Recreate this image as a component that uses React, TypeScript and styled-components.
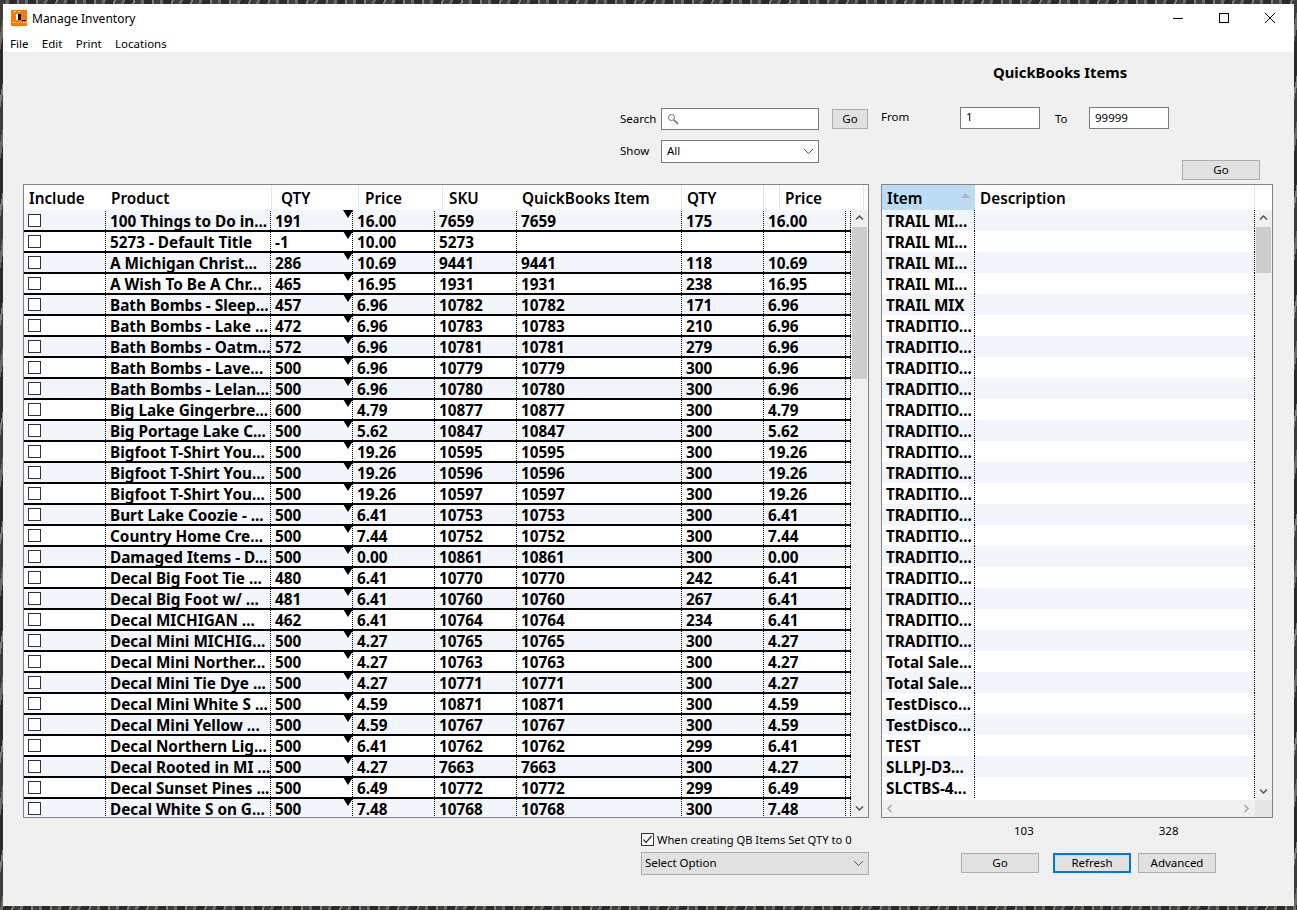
import styled, { createGlobalStyle } from "styled-components";

const GlobalStyle = createGlobalStyle`
  html, body {
    margin: 0;
    height: 910px;
    overflow: hidden;
    background: #3a3a38;
    font-family: "Noto Sans", "Open Sans", "Liberation Sans", sans-serif;
  }
`;

const Desktop = styled.div`
  width: 1297px;
  height: 910px;
  padding: 4px 3px;
  box-sizing: border-box;
  background: repeating-linear-gradient(100deg, #3d3d3b 0 6px, #6a6a66 6px 9px, #2b2b2a 9px 17px, #80807a 17px 19px);
`;

const Window = styled.div`
  height: 902px;
  display: flex;
  flex-direction: column;
  background: #f0f0f0;
`;

const TitleBar = styled.div`
  height: 28px;
  flex: none;
  background: #fff;
  display: flex;
  align-items: center;
  padding-left: 8px;
  font-size: 12px;
  color: #000;
`;

const AppIcon = styled.svg`
  width: 16px;
  height: 16px;
  margin-right: 5px;
`;

const WindowButtons = styled.div`
  margin-left: auto;
  margin-right: 1px;
  display: flex;
  align-self: stretch;
`;

const WindowButton = styled.div`
  width: 46px;
  display: flex;
  align-items: center;
  justify-content: center;
  margin-top: -1px;
`;

const MenuBar = styled.div`
  height: 20px;
  flex: none;
  box-sizing: border-box;
  padding: 2px 0 0 7px;
  background: #fff;
  display: flex;
  align-items: center;
  gap: 13.4px;
  font-size: 11.5px;
`;

const Body = styled.div`
  flex: 1;
  display: flex;
  padding: 0 21px 0 20px;
  gap: 12px;
`;

const LeftColumn = styled.div`
  width: 846px;
  display: flex;
  flex-direction: column;
`;

const RightColumn = styled.div`
  width: 392px;
  display: flex;
  flex-direction: column;
`;

const LeftTop = styled.div`
  height: 132px;
  box-sizing: border-box;
  padding: 56px 1px 0 597px;
  display: grid;
  grid-template-columns: 41px 158px 13px 36px;
  grid-template-rows: 22px 23px;
  row-gap: 10px;
  align-items: center;
  font-size: 11.5px;
`;

const Label = styled.span`
  padding-bottom: 2px;
`;

const RightTop = styled.div`
  height: 132px;
  box-sizing: border-box;
  display: flex;
  flex-direction: column;
  font-size: 11.5px;
`;

const Heading = styled.div`
  font-weight: 700;
  font-size: 14.8px;
  margin: 11px 0 0 112px;
  height: 21px;
  line-height: 18px;
`;

const RangeRow = styled.div`
  display: flex;
  align-items: center;
  margin-top: 22px;
  height: 23px;
`;

const RangeLabel = styled.span<{ $width: number; $nudge: number; $pad?: number }>`
  width: ${(p) => p.$width}px;
  box-sizing: border-box;
  padding-left: ${(p) => p.$pad ?? 0}px;
  transform: translateY(${(p) => p.$nudge}px);
`;

const Field = styled.div<{ $width?: number; $nudge?: number }>`
  height: 22px;
  box-sizing: border-box;
  width: ${(p) => (p.$width ? `${p.$width}px` : "auto")};
  margin-top: ${(p) => p.$nudge ?? 0}px;
  border: 1px solid #7a7a7a;
  background: #fff;
  display: flex;
  align-items: center;
  padding: 0 5px 2px;
  font-size: 11.5px;
`;

const SelectBox = styled(Field)<{ $disabled?: boolean }>`
  height: 23px;
  justify-content: space-between;
  background: ${(p) => (p.$disabled ? "#e1e1e1" : "#fff")};
  border-color: ${(p) => (p.$disabled ? "#adadad" : "#7a7a7a")};
  padding-right: 4px;
  padding-left: ${(p) => (p.$disabled ? 3 : 5)}px;
  letter-spacing: ${(p) => (p.$disabled ? "-0.05px" : "0")};
  svg {
    margin-top: 2px;
  }
`;

const SearchIcon = styled.svg`
  margin-top: 2px;
`;

const Button = styled.div<{ $width: number; $focused?: boolean }>`
  width: ${(p) => p.$width}px;
  height: 20px;
  box-sizing: border-box;
  background: #e1e1e1;
  border: ${(p) => (p.$focused ? "2px solid #0078d7" : "1px solid #adadad")};
  display: flex;
  align-items: center;
  justify-content: center;
  padding-bottom: 2px;
  font-size: 11.5px;
`;

const RangeGo = styled.div`
  display: flex;
  justify-content: flex-end;
  padding-right: 13px;
  margin-top: 31px;
`;

const Table = styled.div`
  height: 634px;
  box-sizing: border-box;
  border: 1px solid #82828a;
  background: #fff;
  position: relative;
  overflow: hidden;
`;

const HeaderRow = styled.div`
  height: 25px;
  display: flex;
  background: #fff;
`;

const HeaderCell = styled.div<{ $width: number; $pad: number; $sorted?: boolean; $line?: boolean }>`
  width: ${(p) => p.$width}px;
  flex: none;
  box-sizing: border-box;
  padding-left: ${(p) => p.$pad}px;
  padding-top: 1px;
  display: flex;
  align-items: center;
  font-size: 15.3px;
  font-weight: 600;
  color: #000;
  background: ${(p) => (p.$sorted ? "#bcdcf4" : "#fff")};
  border-right: ${(p) => (p.$line ? "1px solid #e5e5e5" : "none")};
`;

const SortArrow = styled.svg`
  margin-left: auto;
  margin-right: 5px;
  margin-bottom: 6px;
`;

const GridBody = styled.div`
  display: flex;
`;

const Rows = styled.div<{ $width: number; $ruled?: boolean }>`
  width: ${(p) => p.$width}px;
  flex: none;
  box-sizing: border-box;
  padding-top: ${(p) => (p.$ruled ? 1 : 0)}px;
  background: ${(p) => (p.$ruled ? "linear-gradient(#f2f5fa 1px, #fff 1px)" : "#fff")};
`;

const Row = styled.div<{ $alt: boolean; $ruled?: boolean }>`
  height: 21px;
  box-sizing: border-box;
  display: flex;
  line-height: ${(p) => (p.$ruled ? 20 : 22)}px;
  background: ${(p) => (p.$alt ? "#f2f5fa" : "#fff")};
  border-bottom: ${(p) => (p.$ruled ? "2px solid #000" : "none")};
`;

const Cell = styled.div<{ $width: number }>`
  width: ${(p) => p.$width}px;
  flex: none;
  box-sizing: border-box;
  position: relative;
  padding-left: 4px;
  font-size: 15.3px;
  font-weight: 700;
  color: #000;
  white-space: nowrap;
  border-right: 1px dotted #000;
`;

const CheckCell = styled(Cell)`
  padding: 3px 0 0 4px;
`;

const Check = styled.span`
  display: block;
  width: 13px;
  height: 13px;
  box-sizing: border-box;
  border: 1px solid #333;
  background: #fff;
`;

const Corner = styled.span`
  position: absolute;
  right: -1px;
  top: -1px;
  width: 0;
  height: 0;
  border-left: 5px solid transparent;
  border-right: 5px solid transparent;
  border-top: 8px solid #000;
`;

const VScroll = styled.div<{ $height: number; $thumbTop: number; $thumbHeight: number }>`
  width: 17px;
  height: ${(p) => p.$height}px;
  flex: none;
  background: #f0f0f0;
  position: relative;
  display: flex;
  flex-direction: column;
  justify-content: space-between;
  &::after {
    content: "";
    position: absolute;
    left: 1px;
    right: 1px;
    top: ${(p) => p.$thumbTop}px;
    height: ${(p) => p.$thumbHeight}px;
    background: #cdcdcd;
  }
`;

const ScrollCap = styled.div`
  height: 17px;
  display: flex;
  align-items: center;
  justify-content: center;
`;

const HScroll = styled.div`
  position: absolute;
  left: 0;
  right: 0;
  bottom: 0;
  height: 17px;
  background: #f0f0f0;
  display: flex;
  align-items: center;
  justify-content: space-between;
  padding: 0 21px 0 4px;
  &::after {
    content: "";
    position: absolute;
    right: 0;
    top: 0;
    width: 17px;
    height: 17px;
    background: #e6e6e6;
  }
`;

const BottomLeft = styled.div`
  display: flex;
  flex-direction: column;
  align-items: flex-end;
  margin-top: 14px;
`;

const CheckRow = styled.div`
  width: 228px;
  height: 16px;
  display: flex;
  align-items: center;
  font-size: 11.2px;
  gap: 3px;
  margin-top: -1px;
`;

const CheckedBox = styled.svg`
  width: 13px;
  height: 13px;
  flex: none;
`;

const WideSelect = styled(SelectBox)`
  margin-top: 5px;
`;

const Counts = styled.div`
  display: flex;
  font-size: 11.5px;
  margin-top: 5px;
  height: 16px;
`;

const Count = styled.span<{ $left: number }>`
  margin-left: ${(p) => p.$left}px;
`;

const BottomButtons = styled.div`
  display: flex;
  margin: 14px 0 0 80px;
  gap: 7px;
`;

const GapButton = styled(Button)`
  margin-right: 7px;
`;

const Chevron = ({ dir }: { dir: "up" | "down" | "left" | "right" }) => {
  const d = {
    up: "M1 5.5 L4.5 2 L8 5.5",
    down: "M1 2.5 L4.5 6 L8 2.5",
    left: "M5.5 1 L2 4.5 L5.5 8",
    right: "M2.5 1 L6 4.5 L2.5 8",
  }[dir];
  const light = dir === "left" || dir === "right";
  return (
    <svg width="9" height="9" viewBox="0 0 9 9">
      <path d={d} fill="none" stroke={light ? "#a3a3a3" : "#505050"} strokeWidth="1.5" />
    </svg>
  );
};

const DropArrow = () => (
  <svg width="11" height="7" viewBox="0 0 11 7">
    <path d="M1 1 L5.5 5.5 L10 1" fill="none" stroke="#555" strokeWidth="1" />
  </svg>
);

const products: [string, string, string, string, string, string, string][] = [
  ["100 Things to Do in...", "191", "16.00", "7659", "7659", "175", "16.00"],
  ["5273 - Default Title", "-1", "10.00", "5273", "", "", ""],
  ["A Michigan Christ...", "286", "10.69", "9441", "9441", "118", "10.69"],
  ["A Wish To Be A Chr...", "465", "16.95", "1931", "1931", "238", "16.95"],
  ["Bath Bombs - Sleep...", "457", "6.96", "10782", "10782", "171", "6.96"],
  ["Bath Bombs - Lake ...", "472", "6.96", "10783", "10783", "210", "6.96"],
  ["Bath Bombs - Oatm...", "572", "6.96", "10781", "10781", "279", "6.96"],
  ["Bath Bombs - Lave...", "500", "6.96", "10779", "10779", "300", "6.96"],
  ["Bath Bombs - Lelan...", "500", "6.96", "10780", "10780", "300", "6.96"],
  ["Big Lake Gingerbre...", "600", "4.79", "10877", "10877", "300", "4.79"],
  ["Big Portage Lake C...", "500", "5.62", "10847", "10847", "300", "5.62"],
  ["Bigfoot T-Shirt You...", "500", "19.26", "10595", "10595", "300", "19.26"],
  ["Bigfoot T-Shirt You...", "500", "19.26", "10596", "10596", "300", "19.26"],
  ["Bigfoot T-Shirt You...", "500", "19.26", "10597", "10597", "300", "19.26"],
  ["Burt Lake Coozie - ...", "500", "6.41", "10753", "10753", "300", "6.41"],
  ["Country Home Cre...", "500", "7.44", "10752", "10752", "300", "7.44"],
  ["Damaged Items - D...", "500", "0.00", "10861", "10861", "300", "0.00"],
  ["Decal Big Foot Tie ...", "480", "6.41", "10770", "10770", "242", "6.41"],
  ["Decal Big Foot w/ ...", "481", "6.41", "10760", "10760", "267", "6.41"],
  ["Decal MICHIGAN ...", "462", "6.41", "10764", "10764", "234", "6.41"],
  ["Decal Mini MICHIG...", "500", "4.27", "10765", "10765", "300", "4.27"],
  ["Decal Mini Norther...", "500", "4.27", "10763", "10763", "300", "4.27"],
  ["Decal Mini Tie Dye ...", "500", "4.27", "10771", "10771", "300", "4.27"],
  ["Decal Mini White S ...", "500", "4.59", "10871", "10871", "300", "4.59"],
  ["Decal Mini Yellow ...", "500", "4.59", "10767", "10767", "300", "4.59"],
  ["Decal Northern Lig...", "500", "6.41", "10762", "10762", "299", "6.41"],
  ["Decal Rooted in MI ...", "500", "4.27", "7663", "7663", "300", "4.27"],
  ["Decal Sunset Pines ...", "500", "6.49", "10772", "10772", "299", "6.49"],
  ["Decal White S on G...", "500", "7.48", "10768", "10768", "300", "7.48"],
];

const qbItems = [
  "TRAIL MI...", "TRAIL MI...", "TRAIL MI...", "TRAIL MI...", "TRAIL MIX",
  "TRADITIO...", "TRADITIO...", "TRADITIO...", "TRADITIO...", "TRADITIO...",
  "TRADITIO...", "TRADITIO...", "TRADITIO...", "TRADITIO...", "TRADITIO...",
  "TRADITIO...", "TRADITIO...", "TRADITIO...", "TRADITIO...", "TRADITIO...",
  "TRADITIO...", "Total Sale...", "Total Sale...", "TestDisco...", "TestDisco...",
  "TEST", "SLLPJ-D3...", "SLCTBS-4...",
];

const leftHeaders: [string, number, number, boolean][] = [
  ["Include", 81, 5, false],
  ["Product", 167, 6, true],
  ["QTY", 87, 9, true],
  ["Price", 84, 6, true],
  ["SKU", 73, 6, false],
  ["QuickBooks Item", 166, 6, true],
  ["QTY", 82, 5, true],
  ["", 16, 0, true],
  ["Price", 84, 5, true],
];

const widths = [82, 165, 82, 82, 82, 165, 82, 82];

export default function App() {
  return (
    <>
      <GlobalStyle />
      <Desktop>
        <Window>
          <TitleBar>
            <AppIcon viewBox="0 0 16 16">
              <rect width="16" height="16" fill="#ff7a00" />
              <path d="M3 1h2v1H3zM7 1h2v1H7zM5 4h2v6H5z" fill="#fff" />
              <path d="M7 4h3v6H7zM11 10h4v1h-4z" fill="#000" />
              <path d="M2 12h1v1H2zM4 12h1v1H4zM6 12h1v1H6zM8 12h1v1H8zM10 12h1v1h-1zM12 12h1v1h-1zM14 12h1v1h-1z" fill="#fff" />
            </AppIcon>
            Manage Inventory
            <WindowButtons>
              <WindowButton>
                <svg width="10" height="10" viewBox="0 0 10 10">
                  <path d="M0 5.5H10" stroke="#000" strokeWidth="1" />
                </svg>
              </WindowButton>
              <WindowButton>
                <svg width="10" height="10" viewBox="0 0 10 10">
                  <rect x="0.5" y="0.5" width="9" height="9" fill="none" stroke="#000" />
                </svg>
              </WindowButton>
              <WindowButton>
                <svg width="10" height="10" viewBox="0 0 10 10">
                  <path d="M0 0L10 10M10 0L0 10" stroke="#000" strokeWidth="1" />
                </svg>
              </WindowButton>
            </WindowButtons>
          </TitleBar>
          <MenuBar>
            <span>File</span>
            <span>Edit</span>
            <span>Print</span>
            <span>Locations</span>
          </MenuBar>
          <Body>
            <LeftColumn>
              <LeftTop>
                <Label>Search</Label>
                <Field>
                  <SearchIcon width="12" height="12" viewBox="0 0 12 12">
                    <circle cx="4.5" cy="4.5" r="3" fill="none" stroke="#666" />
                    <path d="M7 7L11 11" stroke="#666" strokeWidth="1.4" />
                  </SearchIcon>
                </Field>
                <span />
                <Button $width={36}>Go</Button>
                <Label>Show</Label>
                <SelectBox>
                  All
                  <DropArrow />
                </SelectBox>
              </LeftTop>
              <Table>
                <HeaderRow>
                  {leftHeaders.map(([label, width, pad, line], i) => (
                    <HeaderCell key={i} $width={width} $pad={pad} $line={line}>
                      {label}
                    </HeaderCell>
                  ))}
                </HeaderRow>
                <GridBody>
                  <Rows $width={827} $ruled>
                    {products.map((p, i) => (
                      <Row key={i} $alt={i % 2 === 0} $ruled>
                        <CheckCell $width={widths[0]}>
                          <Check />
                        </CheckCell>
                        {p.map((value, c) => (
                          <Cell key={c} $width={widths[c + 1]}>
                            {value}
                            {c === 1 && <Corner />}
                          </Cell>
                        ))}
                        <Cell $width={5} />
                      </Row>
                    ))}
                  </Rows>
                  <VScroll $height={607} $thumbTop={17} $thumbHeight={152}>
                    <ScrollCap>
                      <Chevron dir="up" />
                    </ScrollCap>
                    <ScrollCap>
                      <Chevron dir="down" />
                    </ScrollCap>
                  </VScroll>
                </GridBody>
              </Table>
              <BottomLeft>
                <CheckRow>
                  <CheckedBox viewBox="0 0 13 13">
                    <rect x="0.5" y="0.5" width="12" height="12" fill="#fff" stroke="#333" />
                    <path d="M2.5 6.5L5 9.5L10.5 3" fill="none" stroke="#333" strokeWidth="1.3" />
                  </CheckedBox>
                  When creating QB Items Set QTY to 0
                </CheckRow>
                <WideSelect $width={228} $disabled>
                  Select Option
                  <DropArrow />
                </WideSelect>
              </BottomLeft>
            </LeftColumn>
            <RightColumn>
              <RightTop>
                <Heading>QuickBooks Items</Heading>
                <RangeRow>
                  <RangeLabel $width={79} $nudge={-1}>From</RangeLabel>
                  <Field $width={80}>1</Field>
                  <RangeLabel $width={49} $nudge={1} $pad={15}>To</RangeLabel>
                  <Field $width={80} $nudge={1}>99999</Field>
                </RangeRow>
                <RangeGo>
                  <Button $width={78}>Go</Button>
                </RangeGo>
              </RightTop>
              <Table>
                <HeaderRow>
                  <HeaderCell $width={93} $pad={5} $sorted>
                    Item
                    <SortArrow width="9" height="5" viewBox="0 0 9 5">
                      <path d="M4.5 0L9 5H0z" fill="#a6b6c2" />
                    </SortArrow>
                  </HeaderCell>
                  <HeaderCell $width={280} $pad={5} $line>
                    Description
                  </HeaderCell>
                </HeaderRow>
                <GridBody>
                  <Rows $width={373}>
                    {qbItems.map((item, i) => (
                      <Row key={i} $alt={i % 2 === 0}>
                        <Cell $width={93}>{item}</Cell>
                        <Cell $width={280} />
                      </Row>
                    ))}
                  </Rows>
                  <VScroll $height={590} $thumbTop={17} $thumbHeight={46}>
                    <ScrollCap>
                      <Chevron dir="up" />
                    </ScrollCap>
                    <ScrollCap>
                      <Chevron dir="down" />
                    </ScrollCap>
                  </VScroll>
                </GridBody>
                <HScroll>
                  <Chevron dir="left" />
                  <Chevron dir="right" />
                </HScroll>
              </Table>
              <Counts>
                <Count $left={133}>103</Count>
                <Count $left={125}>328</Count>
              </Counts>
              <BottomButtons>
                <GapButton $width={78}>Go</GapButton>
                <Button $width={78} $focused>Refresh</Button>
                <Button $width={78}>Advanced</Button>
              </BottomButtons>
            </RightColumn>
          </Body>
        </Window>
      </Desktop>
    </>
  );
}
